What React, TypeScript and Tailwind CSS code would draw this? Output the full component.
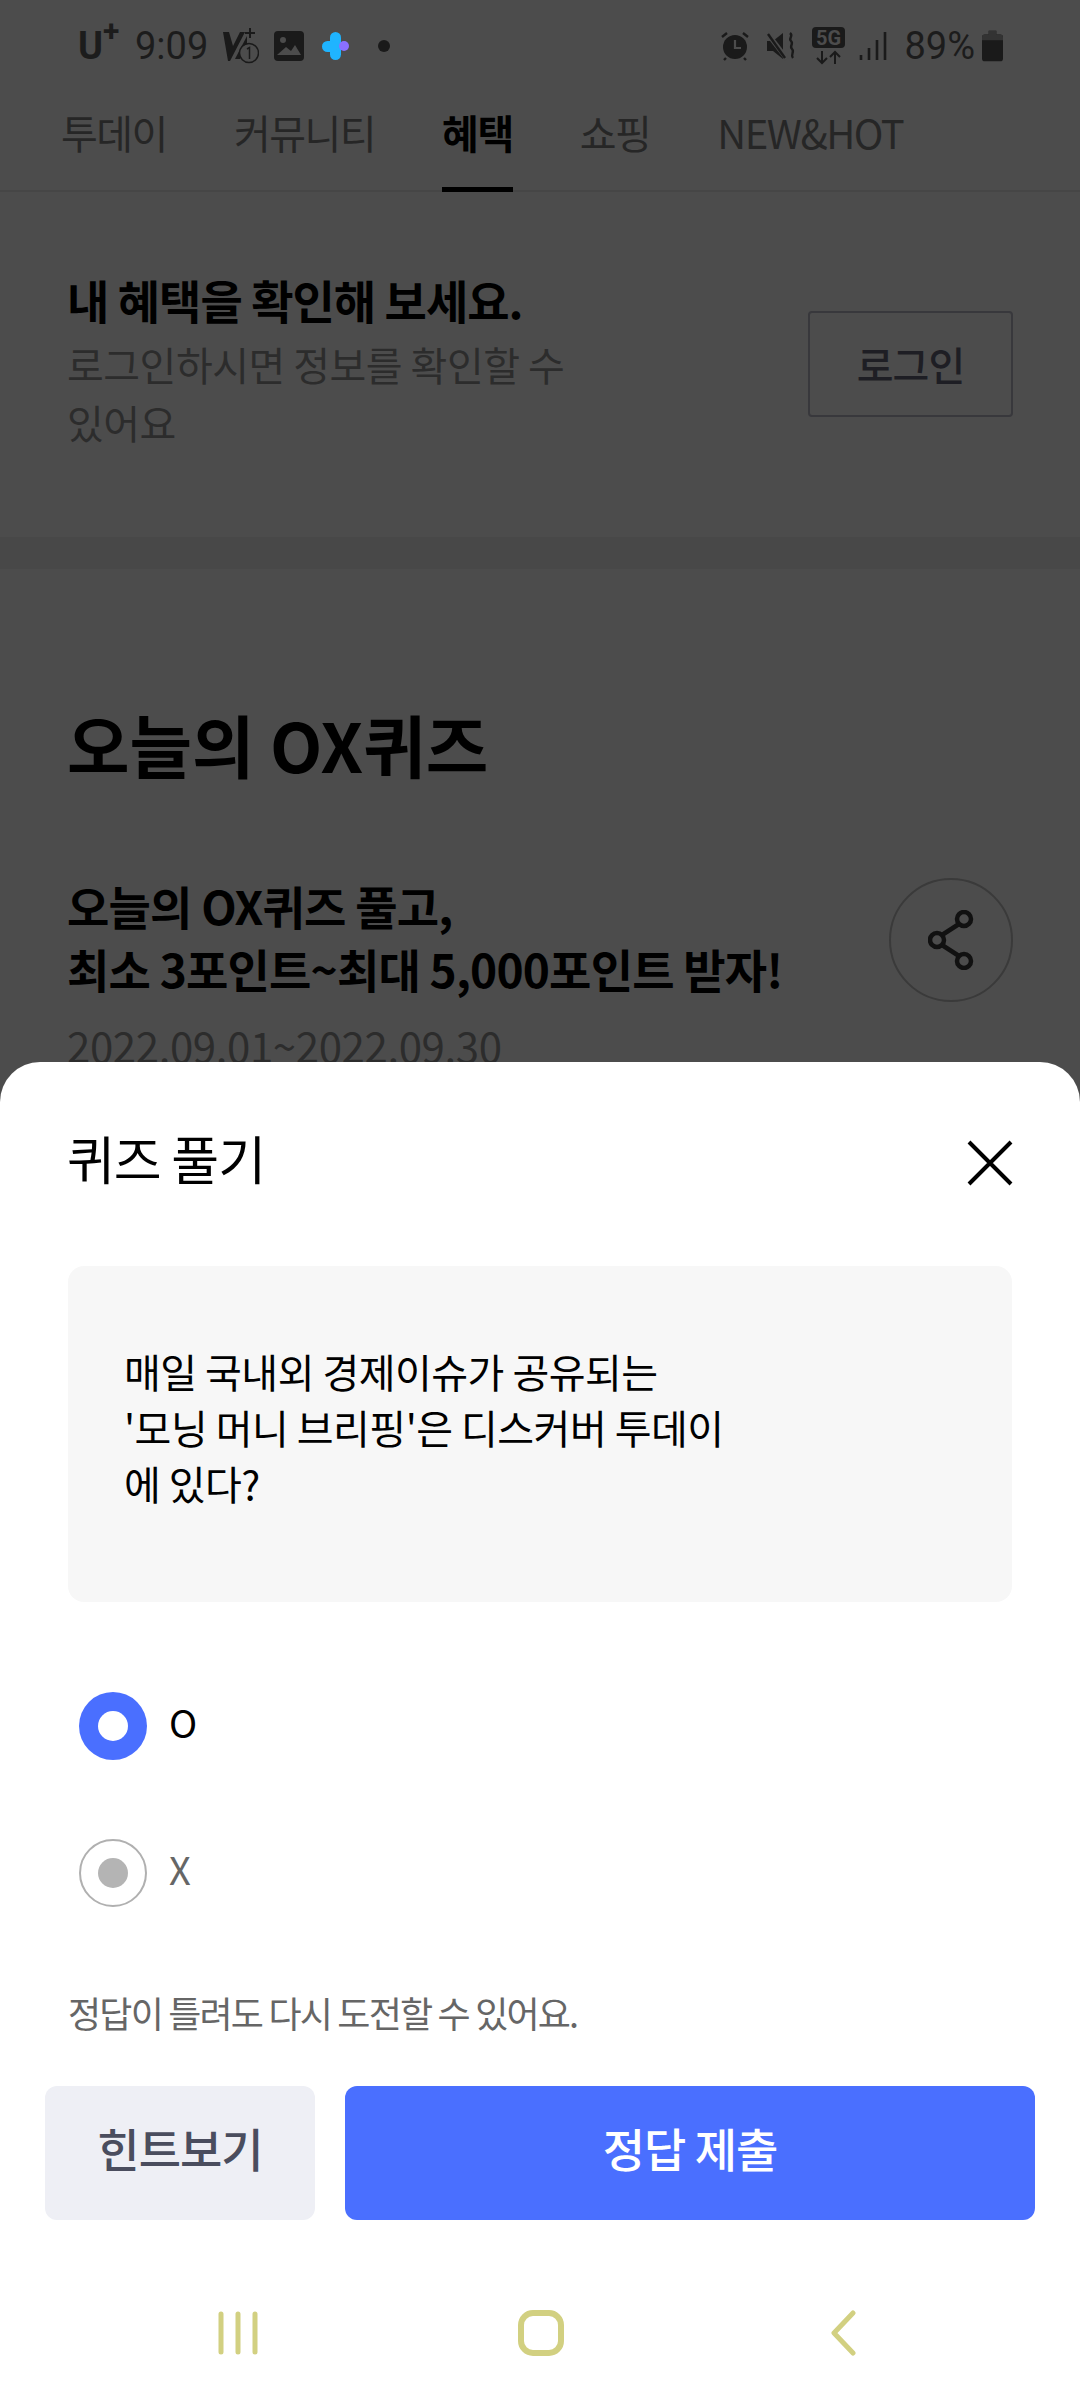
const FONT = '"Noto Sans CJK KR", "Noto Sans", sans-serif'

function StatusLeft() {
  return (
    <div className="flex items-center">
      <span className="relative w-[45px] h-[44px] text-[38px] leading-[44px] font-bold text-[#1c1c1c] font-['Roboto']">
        U
        <span className="absolute left-[25px] top-[-9px] text-[30px] leading-[32px]">+</span>
      </span>
      <span className="ml-[12px] text-[38px] leading-[44px] text-[#1c1c1c] font-['Roboto']">9:09</span>
      <svg className="ml-[15px]" width="36" height="36" viewBox="0 0 36 36">
        <path d="M0 4h6l4 14L17 4h5L7 33H5z" fill="#1a1a1a" />
        <path d="M12 31L24 8v10l-7 13z" fill="#1a1a1a" />
        <path d="M27 0v10M22 5h10" stroke="#1a1a1a" strokeWidth="2" />
        <circle cx="26" cy="25" r="9.5" fill="#4c4c4c" stroke="#1a1a1a" strokeWidth="1.5" />
        <path d="M24 21l2.5-1.5V31" stroke="#1a1a1a" strokeWidth="1.5" fill="none" />
      </svg>
      <svg className="ml-[15px]" width="30" height="30" viewBox="0 0 30 30">
        <rect width="30" height="30" rx="4" fill="#1a1a1a" />
        <circle cx="9" cy="9" r="3" fill="#4c4c4c" />
        <path d="M3 24l9-8 5 4 4-6 6 10z" fill="#4c4c4c" />
      </svg>
      <svg className="ml-[18px]" width="27" height="28" viewBox="0 0 27 28">
        <rect x="8" y="0" width="11" height="28" rx="5.5" fill="#1fb4ff" />
        <rect x="0" y="9" width="16" height="11" rx="5.5" fill="#1fb4ff" />
        <circle cx="22" cy="14" r="5" fill="#8a70ff" />
      </svg>
      <span className="ml-[29px] w-[12px] h-[12px] rounded-full bg-[#1a1a1a]" />
    </div>
  )
}

function StatusRight() {
  return (
    <div className="flex items-center">
      <svg width="30" height="30" viewBox="0 0 30 30">
        <circle cx="15" cy="16" r="12" fill="#1a1a1a" />
        <path d="M15 9v8h6" stroke="#4c4c4c" strokeWidth="2.2" fill="none" />
        <path d="M2 6l5-4M28 6l-5-4M6 27l-2 2M24 27l2 2" stroke="#1a1a1a" strokeWidth="2.4" />
      </svg>
      <svg className="ml-[16px]" width="30" height="30" viewBox="0 0 30 30">
        <path d="M1 10h6l10-8v26l-10-8H1z" fill="#1a1a1a" />
        <path d="M1 2l20 26" stroke="#4c4c4c" strokeWidth="5" />
        <path d="M2 3l17 24" stroke="#1a1a1a" strokeWidth="2.4" />
        <path d="M24 2c4 3-2 5 1 8s-2 5 1 8-2 5 1 9" stroke="#1a1a1a" strokeWidth="2.4" fill="none" />
      </svg>
      <svg className="ml-[16px]" width="34" height="38" viewBox="0 0 34 38">
        <rect width="33" height="21" rx="4" fill="#1a1a1a" />
        <text x="16.5" y="17.5" textAnchor="middle" fontSize="20" fontWeight="700" fill="#4c4c4c" fontFamily="Roboto">5G</text>
        <path d="M10 24v12M5 31l5 5 5-5M23 37V25M18 30l5-5 5 5" stroke="#1a1a1a" strokeWidth="2" fill="none" />
      </svg>
      <svg className="ml-[13px]" width="28" height="30" viewBox="0 0 28 30">
        <path d="M2 24v5M10 17v12M18 9v20M26 1v28" stroke="#1a1a1a" strokeWidth="2.6" />
      </svg>
      <span className="ml-[17px] text-[38px] leading-[44px] text-[#1c1c1c] font-['Roboto']">89%</span>
      <svg className="ml-[7px]" width="21" height="32" viewBox="0 0 22 32">
        <path d="M7 0h8v4h4a3 3 0 0 1 3 3v22a3 3 0 0 1-3 3H3a3 3 0 0 1-3-3V7a3 3 0 0 1 3-3h4z" fill="#1a1a1a" />
        <path d="M7 0h8v4h4a3 3 0 0 1 3 3v3H0V7a3 3 0 0 1 3-3h4z" fill="#333333" />
      </svg>
    </div>
  )
}

function Radio({ on, label }: { on: boolean; label: string }) {
  return (
    <div className="flex items-center h-[68px] pl-[11px]">
      {on ? (
        <div className="w-[68px] h-[68px] rounded-full bg-[#4a6fff] flex items-center justify-center">
          <div className="w-[30px] h-[30px] rounded-full bg-white" />
        </div>
      ) : (
        <div className="w-[68px] h-[68px] rounded-full border-2 border-[#b0b0b0] flex items-center justify-center">
          <div className="w-[30px] h-[30px] rounded-full bg-[#b4b4b4]" />
        </div>
      )}
      <span className={`ml-[22px] mb-[8px] text-[38px] leading-[50px] ${on ? 'text-black' : 'text-[#666666]'}`}>{label}</span>
    </div>
  )
}

export default function App() {
  return (
    <div className="relative w-[1080px] h-[2400px] overflow-hidden bg-[#4c4c4c]" style={{ fontFamily: FONT }}>
      {/* status bar */}
      <div className="flex items-center justify-between h-[92px] pl-[78px] pr-[77px]">
        <StatusLeft />
        <StatusRight />
      </div>

      {/* tabs */}
      <div className="flex h-[100px] pl-[61px] gap-[67px] border-b-2 border-[#464646] text-[40px] tracking-[-1.5px] text-[#262626]">
        <div className="pt-[15px] leading-[50px]">투데이</div>
        <div className="pt-[15px] leading-[50px]">커뮤니티</div>
        <div className="pt-[15px] leading-[50px] font-bold text-black h-[100px] border-b-[5px] border-black">혜택</div>
        <div className="pt-[15px] leading-[50px]">쇼핑</div>
        <div className="pt-[15px] leading-[50px]">NEW&amp;HOT</div>
      </div>

      {/* login banner */}
      <div className="flex justify-between h-[377px] px-[67px] pt-[79px] border-b-[32px] border-[#484848]">
        <div>
          <div className="text-[46px] leading-[56px] font-bold tracking-[-1px] text-black">내 혜택을 확인해 보세요.</div>
          <div className="w-[520px] mt-[8px] text-[40px] leading-[58px] tracking-[-0.5px] text-[#2c2c2c]">로그인하시면 정보를 확인할 수 있어요</div>
        </div>
        <div className="w-[205px] h-[106px] mt-[40px] flex items-center justify-center rounded-[4px] border-2 border-[#38383c] text-[40px] font-medium tracking-[-1px] text-[#1e1e24]">로그인</div>
      </div>

      {/* quiz event */}
      <div className="px-[67px]">
        <h1 className="mt-[130px] text-[68px] leading-[90px] font-bold text-black">오늘의 OX퀴즈</h1>
        <div className="flex justify-between mt-[85px]">
          <div>
            <div className="text-[46px] leading-[63px] font-bold tracking-[-0.8px] text-black">
              오늘의 OX퀴즈 풀고,
              <br />
              최소 3포인트~최대 5,000포인트 받자!
            </div>
            <div className="mt-[20px] text-[42px] leading-[50px] tracking-[-0.4px] text-[#2c2c2c]">2022.09.01~2022.09.30</div>
          </div>
          <div className="w-[124px] h-[124px] mt-[4px] rounded-full border-2 border-[#3a3a3a] flex items-center justify-center">
            <svg width="46" height="60" viewBox="0 0 46 60" fill="none" stroke="#111111" strokeWidth="4.5">
              <circle cx="36" cy="9" r="7" />
              <circle cx="9" cy="30" r="7" />
              <circle cx="36" cy="51" r="7" />
              <path d="M31 14L14 25M14 35l17 11" />
            </svg>
          </div>
        </div>
      </div>

      {/* quiz sheet */}
      <div className="absolute left-0 right-0 bottom-0 h-[1338px] bg-white rounded-t-[40px] flex flex-col">
        <div className="flex justify-between items-center h-[204px] px-[67px] pb-[10px]">
          <span className="text-[52px] leading-[64px] tracking-[-1px] mb-[3px] text-black">퀴즈 풀기</span>
          <svg className="mt-[8px]" width="46" height="46" viewBox="0 0 46 46" stroke="#000000" strokeWidth="4">
            <path d="M2 2l42 42M44 2L2 44" />
          </svg>
        </div>
        <div className="mx-[68px] h-[336px] rounded-[16px] bg-[#f7f7f7] pl-[56px] pt-[77px] text-[40px] leading-[56px] tracking-[-0.5px] text-black">
          매일 국내외 경제이슈가 공유되는
          <br />
          '모닝 머니 브리핑'은 디스커버 투데이
          <br />
          에 있다?
        </div>
        <div className="flex flex-col gap-[79px] pl-[68px] mt-[90px]">
          <Radio on label="O" />
          <Radio on={false} label="X" />
        </div>
        <div className="mt-[82px] pl-[68px] text-[36px] leading-[46px] tracking-[-1.8px] text-[#666666]">정답이 틀려도 다시 도전할 수 있어요.</div>
        <div className="flex gap-[30px] mt-[51px] px-[45px]">
          <button className="w-[270px] h-[134px] pb-[12px] rounded-[12px] bg-[#eeeff5] text-[46px] font-medium tracking-[-1px] text-[#4a4d5e]">힌트보기</button>
          <button className="flex-1 h-[134px] pb-[12px] rounded-[12px] bg-[#4a6fff] text-[46px] font-medium tracking-[-1px] text-white">정답 제출</button>
        </div>
        <div className="flex items-center pl-[218px] pt-[90px]">
          <svg width="40" height="44" viewBox="0 0 40 44" stroke="#d2d081" strokeWidth="5" strokeLinecap="round">
            <path d="M3 3v38M20 3v38M37 3v38" />
          </svg>
          <svg className="ml-[260px]" width="46" height="46" viewBox="0 0 46 46" fill="none" stroke="#d2d081" strokeWidth="6">
            <rect x="3" y="3" width="40" height="40" rx="12" />
          </svg>
          <svg className="ml-[266px]" width="26" height="46" viewBox="0 0 26 46" fill="none" stroke="#d2d081" strokeWidth="5" strokeLinecap="round" strokeLinejoin="round">
            <path d="M23 3L4 23l19 20" />
          </svg>
        </div>
      </div>
    </div>
  )
}
